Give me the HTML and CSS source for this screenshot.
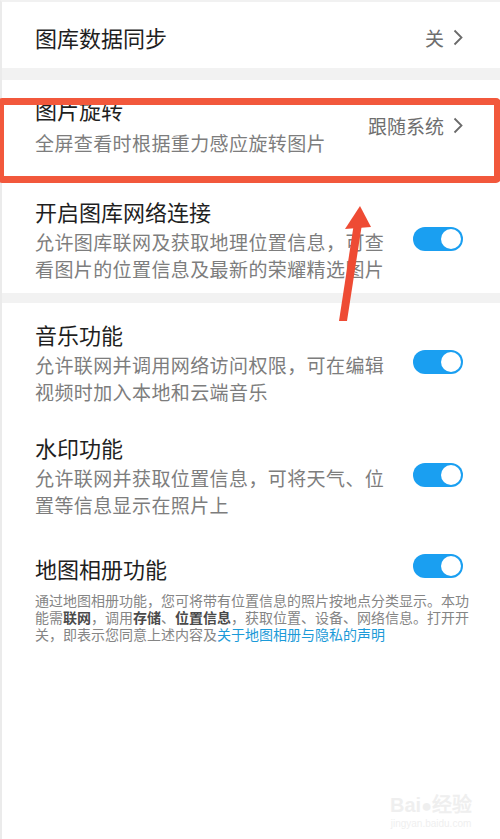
FILE: index.html
```html
<!DOCTYPE html>
<html lang="zh-CN">
<head>
  <meta charset="UTF-8">
  <title>图库设置</title>
  <link rel="stylesheet" href="styles.css">
</head>
<body>

  <div class="page">

    <div class="item first">
      <div class="text">
        <div class="title">图库数据同步</div>
      </div>
      <div class="value">关
        <svg class="chevron" width="10" height="17" viewBox="0 0 10 17"><polyline points="1.5,1.5 8.5,8.5 1.5,15.5" fill="none" stroke="#6a6a6a" stroke-width="1.8"/></svg>
      </div>
    </div>

    <div class="band"></div>

    <div class="item rotate">
      <div class="text">
        <div class="title">图片旋转</div>
        <div class="sub">全屏查看时根据重力感应旋转图片</div>
      </div>
      <div class="value">跟随系统
        <svg class="chevron" width="10" height="17" viewBox="0 0 10 17"><polyline points="1.5,1.5 8.5,8.5 1.5,15.5" fill="none" stroke="#6a6a6a" stroke-width="1.8"/></svg>
      </div>
    </div>

    <div class="item">
      <div class="text">
        <div class="title">开启图库网络连接</div>
        <div class="sub">允许图库联网及获取地理位置信息，可查看图片的位置信息及最新的荣耀精选图片</div>
      </div>
      <span class="switch"><span class="knob"></span></span>
    </div>

    <div class="band thin"></div>

    <div class="item">
      <div class="text">
        <div class="title">音乐功能</div>
        <div class="sub">允许联网并调用网络访问权限，可在编辑视频时加入本地和云端音乐</div>
      </div>
      <span class="switch"><span class="knob"></span></span>
    </div>

    <div class="item">
      <div class="text">
        <div class="title">水印功能</div>
        <div class="sub">允许联网并获取位置信息，可将天气、位置等信息显示在照片上</div>
      </div>
      <span class="switch"><span class="knob"></span></span>
    </div>

    <div class="item map">
      <div class="head">
        <div class="title">地图相册功能</div>
        <span class="switch"><span class="knob"></span></span>
      </div>
      <p class="note">通过地图相册功能，您可将带有位置信息的照片按地点分类显示。本功能需<b>联网</b>，调用<b>存储</b>、<b>位置信息</b>，获取位置、设备、网络信息。打开开关，即表示您同意上述内容及<a href="#">关于地图相册与隐私的声明</a></p>
    </div>

  </div>

  <!-- annotation drawn on top of the screenshot -->
  <div class="highlight"></div>
  <svg class="arrow" width="500" height="839" viewBox="0 0 500 839">
    <polygon points="339,321 347,321 362,224 354,223" fill="#ee4b34"/>
    <polygon points="345,229 371,227 360,206" fill="#ee4b34"/>
  </svg>

  <div class="watermark">
    <div class="wm-logo">Bai<span class="paw">●</span>经验</div>
    <div class="wm-url">jingyan.baidu.com</div>
  </div>

</body>
</html>
```

FILE: styles.css
```css
body {
  margin: 0;
  background: #fff;
  font-family: "Noto Sans CJK SC", "Noto Sans", sans-serif;
  color: #1f1f1f;
  overflow: hidden;
}

.page {
  border-left: 2px solid #ebebeb;
  border-top: 2px solid #f1f1f1;
  min-height: 837px;
}

.item {
  display: flex;
  align-items: center;
  padding: 16px 37px 10px 33px;
}

.item.first {
  padding-top: 20px;
  padding-bottom: 16px;
}

.item.rotate {
  padding-top: 14px;
  padding-bottom: 23px;
}

.item.rotate .sub {
  margin-top: 5px;
}

.text {
  flex: 1;
  max-width: 358px;
}

.title {
  font-size: 22px;
  line-height: 30px;
}

.sub {
  margin-top: 2px;
  font-size: 19px;
  letter-spacing: 0.4px;
  line-height: 27.5px;
  color: #7d7d7d;
}

.value {
  margin-left: auto;
  display: flex;
  align-items: center;
  gap: 9px;
  font-size: 19px;
  color: #6e6e6e;
}

.band {
  height: 12px;
  background: #f2f2f2;
}

.band.thin {
  height: 10px;
}

.switch {
  margin-left: auto;
  position: relative;
  width: 50px;
  height: 24px;
  border-radius: 12px;
  background: #1a9ff1;
  flex: none;
}

.knob {
  position: absolute;
  right: 2px;
  top: 2px;
  width: 20px;
  height: 20px;
  border-radius: 50%;
  background: #fff;
}

.item.map {
  display: block;
  padding-top: 24px;
}

.head {
  display: flex;
  align-items: center;
}

.head .switch {
  margin-top: -4px;
}

.note {
  margin: 9px 0 0;
  width: 436px;
  font-size: 14px;
  line-height: 17px;
  color: #858585;
}

.note b {
  color: #4a4a4a;
}

.note a {
  color: #1b9ad8;
  text-decoration: none;
}

.highlight {
  position: absolute;
  left: -3px;
  top: 98px;
  width: 490px;
  height: 71px;
  border: 7px solid #f2583c;
  border-radius: 5px;
}

.arrow {
  position: absolute;
  left: 0;
  top: 0;
  pointer-events: none;
}

.watermark {
  position: absolute;
  right: 28px;
  bottom: 10px;
  color: #efefef;
  text-align: center;
  font-family: "Liberation Sans", sans-serif;
}

.wm-logo {
  font-size: 20px;
  font-weight: bold;
}

.paw {
  font-size: 18px;
}

.wm-url {
  font-size: 10px;
}
```
